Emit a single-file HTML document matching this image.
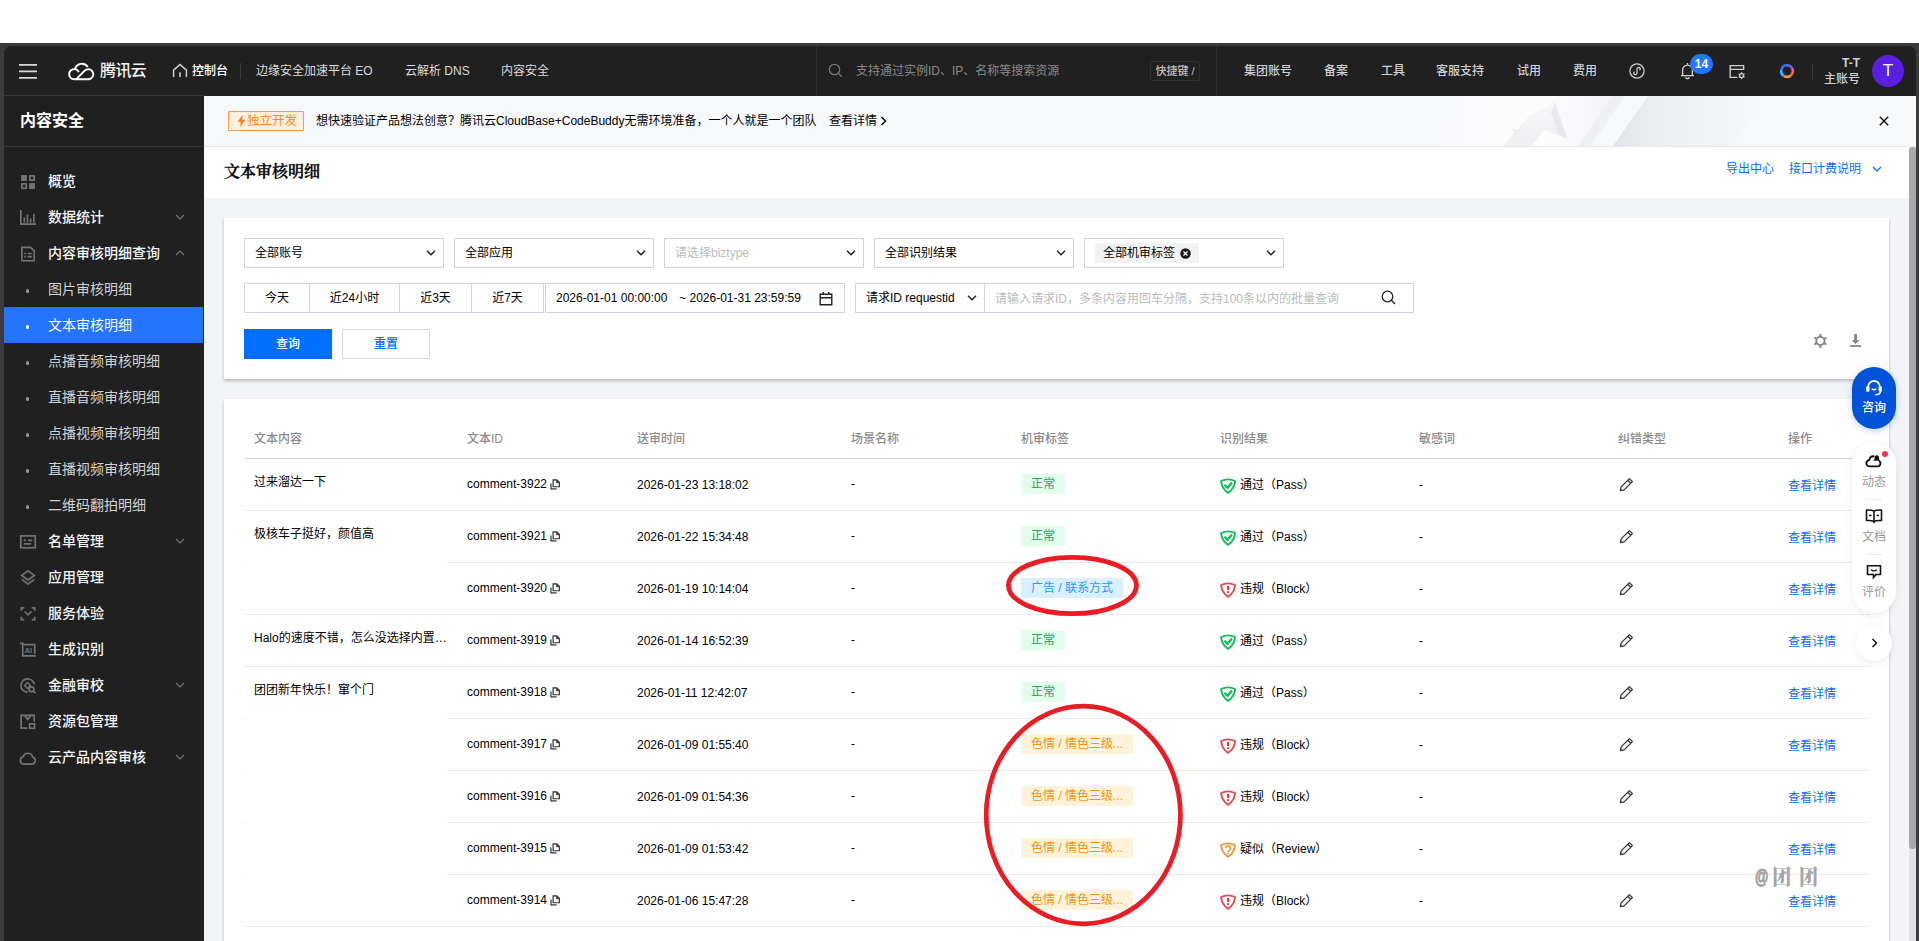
<!DOCTYPE html>
<html lang="zh-CN">
<head>
<meta charset="utf-8">
<title>文本审核明细 - 内容安全 - 腾讯云</title>
<style>
*{box-sizing:border-box;margin:0;padding:0}
html,body{width:1919px;height:941px;overflow:hidden;background:#fff}
body{font-family:"Liberation Sans","Noto Sans CJK SC",sans-serif;font-size:12px;color:#000;position:relative;line-height:1}
.abs{position:absolute}
.t{position:absolute;white-space:nowrap;line-height:20px;height:20px}
svg{display:block;overflow:visible}
#frame{position:absolute;left:0;top:43px;width:1919px;height:898px;background:#3b3b3b}
#inner{position:absolute;left:4px;top:3px;width:1912px;height:895px;background:#202020;border-radius:8px 8px 0 0;overflow:hidden}
/* everything inside #app is positioned in page coordinates */
#app{position:absolute;left:-4px;top:-46px;width:1919px;height:941px}
/* topbar */
.nav{color:#dcdcdc;font-size:12px}
.navr{color:#d0d0d0;font-size:12px;font-weight:500}
/* sidebar */
.mi{position:absolute;left:4px;width:200px;height:36px;color:#f4f4f4;font-size:14px;line-height:36px;font-weight:500}
.mi span{position:absolute;left:44px;top:0;white-space:nowrap}
.mi.sub{color:#d2d2d2;font-weight:400}
.mi.sub:before{content:"";position:absolute;left:21.600px;top:18px;width:3.600px;height:3.600px;background:#9a9a9a;border-radius:50%}
.mi.act{background:#2474ff;color:#fff;width:199px}
.mi.act:before{background:#fff}
.mi svg{position:absolute;left:15px;top:10px;width:17px;height:17px}.mi svg.chev{width:10px;height:10px}
.mi .chev{left:171px;top:13px}
/* main */
#main{position:absolute;left:204px;top:96px;width:1712px;height:845px;background:#f3f4f7}
.card{position:absolute;background:#fff;box-shadow:0 2px 3px 0 rgba(54,58,80,.3)}
.sel{position:absolute;height:30px;border:1px solid #cfd5de;background:#fff;font-size:12px;line-height:28px;padding-left:10px;white-space:nowrap}
.sel .cv{position:absolute;right:7px;top:10px}
.ph{color:#bbb}
.seg{position:absolute;top:283px;height:30px;border:1px solid #cfd5de;background:#fff;text-align:center;line-height:28px;font-size:12px}
/* table */
.th{position:absolute;top:429px;font-size:12px;color:#8b8b8b;line-height:20px;font-weight:500;white-space:nowrap}
.hl{position:absolute;height:1px;background:#e7eaef}
.td{position:absolute;font-size:12px;line-height:20px;white-space:nowrap;color:#000}
.tag{position:absolute;left:1021px;height:20px;line-height:20px;padding:0 10px;font-size:12px;white-space:nowrap}
.tg{background:#e1fdec;color:#27a168}
.tb{background:#daefff;color:#1f9bff}
.to{background:#fef2d9;color:#f8920c}
.lnk{color:#0a6cff}
</style>
</head>
<body>
<div id="frame"><div id="inner"><div id="app">

<!-- TOPBAR -->
<div id="topbar" class="abs" style="left:4px;top:46px;width:1912px;height:50px;background:#202020"></div>
<div class="abs" style="left:4px;top:95px;width:200px;height:1px;background:#363636"></div>
<!-- hamburger -->
<svg class="abs" style="left:19px;top:63px" width="18" height="16" viewBox="0 0 18 16"><path d="M0 1.9h18M0 8.4h18M0 14.9h18" stroke="#d8d8d8" stroke-width="1.6" fill="none"/></svg>
<!-- logo -->
<svg class="abs" style="left:68px;top:61px" width="27" height="20" viewBox="0 0 27 20"><g fill="none" stroke="#fff" stroke-width="1.9" stroke-linecap="butt" stroke-linejoin="round"><path d="M8.06 18.3L16.68 9.68A5.05 5.05 0 1 1 20.25 18.3H6.25A5.05 5.05 0 1 1 10.83 11.12"/><path d="M6.9 8.6A7.1 7.1 0 0 1 19.8 5.9"/></g></svg>
<div class="t" style="left:100px;top:61px;font-size:16px;color:#f2f2f2;letter-spacing:-.6px;font-weight:500">腾讯云</div>
<!-- home -->
<svg class="abs" style="left:172px;top:63px" width="16" height="15" viewBox="0 0 16 15"><path d="M1.6 14V7.2L8 1.4l6.4 5.8V14" fill="none" stroke="#cfcfcf" stroke-width="1.5"/><path d="M8 9.3V14" stroke="#cfcfcf" stroke-width="1.6"/></svg>
<div class="t" style="left:192px;top:61px;font-size:12px;color:#fff;font-weight:500">控制台</div>
<div class="abs" style="left:240px;top:63px;width:1px;height:16px;background:#3a3a3a"></div>
<div class="t nav" style="left:256px;top:61px">边缘安全加速平台 EO</div>
<div class="t nav" style="left:405px;top:61px">云解析 DNS</div>
<div class="t nav" style="left:501px;top:61px">内容安全</div>
<!-- search -->
<div class="abs" style="left:816px;top:46px;width:1px;height:50px;background:#2e2e2e"></div>
<svg class="abs" style="left:828px;top:63px" width="15" height="15" viewBox="0 0 15 15"><circle cx="6.5" cy="6.5" r="5.2" fill="none" stroke="#777" stroke-width="1.3"/><path d="M10.3 10.3l3.6 3.6" stroke="#777" stroke-width="1.3"/></svg>
<div class="t" style="left:856px;top:61px;color:#8a8a8a">支持通过实例ID、IP、名称等搜索资源</div>
<div class="abs" style="left:1150px;top:61px;width:50px;height:20px;border:1px solid #303030;border-radius:2px;color:#c0c0c0;font-size:11px;font-weight:500;line-height:18px;text-align:center;white-space:nowrap">快捷键 /</div>
<div class="abs" style="left:1216px;top:46px;width:1px;height:50px;background:#2e2e2e"></div>
<div class="t navr" style="left:1244px;top:61px">集团账号</div>
<div class="t navr" style="left:1324px;top:61px">备案</div>
<div class="t navr" style="left:1381px;top:61px">工具</div>
<div class="t navr" style="left:1436px;top:61px">客服支持</div>
<div class="t navr" style="left:1517px;top:61px">试用</div>
<div class="t navr" style="left:1573px;top:61px">费用</div>
<!-- mini program icon -->
<svg class="abs" style="left:1629px;top:63px" width="16" height="16" viewBox="0 0 16 16"><circle cx="8" cy="8" r="7.1" fill="none" stroke="#cfcfcf" stroke-width="1.3"/><path d="M10.9 6.9a1.6 1.6 0 1 0-2.9-.9v4a1.6 1.6 0 1 1-2.9-.9" fill="none" stroke="#cfcfcf" stroke-width="1.3" stroke-linecap="round"/></svg>
<!-- bell -->
<svg class="abs" style="left:1680px;top:62px" width="15" height="18" viewBox="0 0 15 18"><path d="M1 13.6h13M2.6 13.4V8a4.9 4.9 0 0 1 9.8 0v5.4" fill="none" stroke="#cfcfcf" stroke-width="1.4" stroke-linejoin="round"/><path d="M7.5 1v1.8M5.6 15.2a2 2 0 0 0 3.8 0" fill="none" stroke="#cfcfcf" stroke-width="1.4"/></svg>
<div class="abs" style="left:1690px;top:54px;width:23px;height:20px;border-radius:10px;background:#1f78ff;color:#fff;font-size:12px;font-weight:bold;text-align:center;line-height:20px">14</div>
<!-- billing icon -->
<svg class="abs" style="left:1729px;top:64px" width="17" height="16" viewBox="0 0 17 16"><path d="M14.6 6V1.6H1.2v11.8h7M1.2 5.4h13.4" fill="none" stroke="#cfcfcf" stroke-width="1.4"/><circle cx="12.6" cy="11.6" r="2" fill="none" stroke="#cfcfcf" stroke-width="1.3"/><path d="M12.6 8.3v1.2M12.6 13.7v1.2M9.7 9.9l1.1.6M14.4 12.7l1.1.6M9.7 13.3l1.1-.6M14.4 10.5l1.1-.6" stroke="#cfcfcf" stroke-width="1.2"/></svg>
<!-- ring -->
<svg class="abs" style="left:1779px;top:63px" width="16" height="16" viewBox="0 0 16 16"><g fill="none" stroke-width="2.6"><path d="M8 2.2A5.8 5.8 0 0 1 13 5.1" stroke="#7a5cf0"/><path d="M13 5.1A5.8 5.8 0 0 1 12.1 12.1" stroke="#ff5a6e"/><path d="M12.1 12.1A5.8 5.8 0 0 1 5 13" stroke="#ff9a2e"/><path d="M5 13A5.8 5.8 0 0 1 2.4 6.5" stroke="#2fb6ff"/><path d="M2.4 6.5A5.8 5.8 0 0 1 8 2.2" stroke="#3a6df5"/></g></svg>
<div class="abs" style="left:1812px;top:63px;width:1px;height:16px;background:#3a3a3a"></div>
<div class="t" style="left:1800px;width:60px;text-align:right;top:53px;color:#cfcfcf;font-weight:bold;font-size:12px">T-T</div>
<div class="t" style="left:1800px;width:60px;text-align:right;top:69px;color:#d4d4d4;font-weight:500;font-size:12px">主账号</div>
<div class="abs" style="left:1872px;top:55px;width:32px;height:32px;border-radius:16px;background:#5a1fe0;color:#fff;font-size:17px;text-align:center;line-height:32px">T</div>

<!-- SIDEBAR -->
<div id="sidebar" class="abs" style="left:4px;top:96px;width:200px;height:845px;background:#202020"></div>
<div class="t" style="left:20px;top:111px;font-size:16px;font-weight:bold;color:#fff">内容安全</div>
<div class="abs" style="left:4px;top:146px;width:200px;height:1px;background:#363636"></div>
<div class="mi " style="top:163px"><svg width="16" height="16" viewBox="0 0 16 16"><path d="M2 2h6v6H2zM10 10h6v6h-6z" transform="translate(-1 -1) scale(.9375)" fill="none"/><rect x="2" y="2" width="5.5" height="5.5" fill="#747474"/><rect x="9.5" y="9.5" width="5.5" height="5.5" fill="#747474"/><rect x="10.2" y="2.7" width="4.1" height="4.1" fill="none" stroke="#747474" stroke-width="1.6"/><rect x="2.7" y="10.2" width="4.1" height="4.1" fill="none" stroke="#747474" stroke-width="1.6"/></svg><span>概览</span></div>
<div class="mi " style="top:199px"><svg width="16" height="16" viewBox="0 0 16 16"><path d="M1.7 1v13.3H16" fill="none" stroke="#747474" stroke-width="1.6"/><path d="M5 8v5M8 5.5V13M11 9v4M14 4.5V13" stroke="#747474" stroke-width="1.5"/></svg><span>数据统计</span><svg class="chev" width="10" height="10" viewBox="0 0 10 10"><path d="M1 3l4 4 4-4" fill="none" stroke="#777" stroke-width="1.2"/></svg></div>
<div class="mi " style="top:235px"><svg width="16" height="16" viewBox="0 0 16 16"><path d="M2.7 2.2h8.2l3.4 3.4v9.2H2.7z" fill="none" stroke="#747474" stroke-width="1.6"/><path d="M5 8h1.6M8 8h4M5 11h1.6M8 11h4" stroke="#747474" stroke-width="1.6"/></svg><span>内容审核明细查询</span><svg class="chev" width="10" height="10" viewBox="0 0 10 10"><path d="M1 7l4-4 4 4" fill="none" stroke="#777" stroke-width="1.2"/></svg></div>
<div class="mi sub" style="top:271px"><span>图片审核明细</span></div>
<div class="mi sub act" style="top:307px"><span>文本审核明细</span></div>
<div class="mi sub" style="top:343px"><span>点播音频审核明细</span></div>
<div class="mi sub" style="top:379px"><span>直播音频审核明细</span></div>
<div class="mi sub" style="top:415px"><span>点播视频审核明细</span></div>
<div class="mi sub" style="top:451px"><span>直播视频审核明细</span></div>
<div class="mi sub" style="top:487px"><span>二维码翻拍明细</span></div>
<div class="mi " style="top:523px"><svg width="16" height="16" viewBox="0 0 16 16"><rect x="1.7" y="2.7" width="13.6" height="11.2" fill="none" stroke="#747474" stroke-width="1.6"/><path d="M4.5 7h2M8.5 7h4M4.5 10.3h7" stroke="#747474" stroke-width="1.6"/></svg><span>名单管理</span><svg class="chev" width="10" height="10" viewBox="0 0 10 10"><path d="M1 3l4 4 4-4" fill="none" stroke="#777" stroke-width="1.2"/></svg></div>
<div class="mi " style="top:559px"><svg width="16" height="16" viewBox="0 0 16 16"><path d="M8.5 1.8l6 4.2-6 4.2-6-4.2z" fill="none" stroke="#747474" stroke-width="1.6" stroke-linejoin="miter"/><path d="M2.5 9.8l6 4.2 6-4.2" fill="none" stroke="#747474" stroke-width="1.6"/></svg><span>应用管理</span></div>
<div class="mi " style="top:595px"><svg width="16" height="16" viewBox="0 0 16 16"><path d="M2.2 5.5V2.7H5M12 2.7h2.8v2.8M14.8 11v2.8H12M5 13.800H2.200V11" fill="none" stroke="#747474" stroke-width="1.6"/><path d="M5.300 6.300l3.200 3 3.300-3.300" fill="none" stroke="#747474" stroke-width="1.6"/></svg><span>服务体验</span></div>
<div class="mi " style="top:631px"><svg width="16" height="16" viewBox="0 0 16 16"><path d="M1 2.200h2.500V14H16M3.500 3.500h11.300V12" fill="none" stroke="#747474" stroke-width="1.600"/><text x="5.200" y="11" font-size="7" font-weight="bold" fill="#747474" font-family="Liberation Sans,sans-serif">AI</text></svg><span>生成识别</span></div>
<div class="mi " style="top:667px"><svg width="16" height="16" viewBox="0 0 16 16"><path d="M8.200 14.300A6.300 6.300 0 1 1 14.300 7" fill="none" stroke="#747474" stroke-width="1.600"/><path d="M5.200 8l2.800-2.800L10.800 8 8 10.800z" fill="none" stroke="#747474" stroke-width="1.300"/><circle cx="11.800" cy="11.500" r="2.300" fill="none" stroke="#747474" stroke-width="1.600"/><path d="M13.500 13.300l2 2" stroke="#747474" stroke-width="1.600"/></svg><span>金融审校</span><svg class="chev" width="10" height="10" viewBox="0 0 10 10"><path d="M1 3l4 4 4-4" fill="none" stroke="#777" stroke-width="1.2"/></svg></div>
<div class="mi " style="top:703px"><svg width="16" height="16" viewBox="0 0 16 16"><path d="M8 14.300H2V2.200h12.300v6" fill="none" stroke="#747474" stroke-width="1.600"/><path d="M5.500 2.500l2.700 3.500 2.700-3.500" fill="none" stroke="#747474" stroke-width="1.600"/><rect x="10" y="10.200" width="4.600" height="4.200" fill="none" stroke="#747474" stroke-width="1.600"/></svg><span>资源包管理</span></div>
<div class="mi " style="top:739px"><svg width="16" height="16" viewBox="0 0 16 16"><path d="M4.800 14.200h7a3.400 3.400 0 0 0 1-6.650A4.600 4.600 0 0 0 3.900 7.300 3.500 3.500 0 0 0 4.800 14.200z" fill="none" stroke="#747474" stroke-width="1.600" stroke-linejoin="round"/></svg><span>云产品内容审核</span><svg class="chev" width="10" height="10" viewBox="0 0 10 10"><path d="M1 3l4 4 4-4" fill="none" stroke="#777" stroke-width="1.2"/></svg></div>

<!-- MAIN -->
<div id="main"></div>
<!-- banner -->
<div class="abs" style="left:204px;top:96px;width:1712px;height:51px;background:#f7f8fa;border-bottom:1px solid #e4e8ef;overflow:hidden">
<svg class="abs" style="left:1176px;top:0" width="540" height="50" viewBox="0 0 540 50">
<defs>
<linearGradient id="g1" x1="0" y1="0" x2="1" y2="0"><stop offset="0" stop-color="#e2e3e6"/><stop offset=".35" stop-color="#eeeff1"/><stop offset="1" stop-color="#f7f8fa"/></linearGradient>
<linearGradient id="g2" x1="0" y1="0" x2="1" y2="0"><stop offset="0" stop-color="#f7f8fa"/><stop offset=".6" stop-color="#fdfdfe"/><stop offset="1" stop-color="#f2f3f5"/></linearGradient>
<linearGradient id="g3" x1="0" y1="0" x2="0" y2="1"><stop offset="0" stop-color="#f3f4f6"/><stop offset="1" stop-color="#e6e7ea"/></linearGradient>
</defs>
<path d="M85 0L50 50h150L235 0z" fill="url(#g2)"/>
<path d="M268 0L233 50h120L388 0z" fill="url(#g1)"/>
<path d="M232 0L198 50h12L245 0z" fill="#eff0f2"/>
<path d="M175 6l12 36-22-8-14 16h-28l26-30z" fill="url(#g3)" opacity=".6"/>
<path d="M175 6l12 36-8-3-8-22z" fill="#e3e4e7" opacity=".7"/>
<path d="M132 33l10 0-5 8z" fill="#eeeff1"/>
</svg>
<div class="abs" style="left:24px;top:15px;width:76px;height:20px;border:1px solid #ff9c4d;background:#ffefdf;border-radius:1px"></div>
<svg class="abs" style="left:33px;top:19px" width="9" height="12" viewBox="0 0 9 12"><path d="M5.600 0L.5 6.800h3.300L3 12l5.500-7.200H5z" fill="#ff7a1a"/></svg>
<div class="t" style="left:43px;top:15px;font-size:12.500px;color:#ff8a2a">独立开发</div>
<div class="t" style="left:112px;top:15px;color:#000">想快速验证产品想法创意？腾讯云CloudBase+CodeBuddy无需环境准备，一个人就是一个团队</div>
<div class="t" style="left:625px;top:15px;color:#000">查看详情</div>
<svg class="abs" style="left:676px;top:20px" width="7" height="10" viewBox="0 0 7 10"><path d="M1.500 1l4 4-4 4" fill="none" stroke="#000" stroke-width="1.400"/></svg>
<svg class="abs" style="left:1675px;top:20px" width="10" height="10" viewBox="0 0 10 10"><path d="M.8.800l8.400 8.400M9.200.800L.8 9.200" stroke="#111" stroke-width="1.400"/></svg>
</div>
<!-- page header -->
<div class="abs" style="left:204px;top:147px;width:1705px;height:51px;background:#fff"></div>
<div class="t" style="left:224px;top:162px;font-family:'Liberation Serif','Noto Serif CJK SC',serif;font-size:16px;font-weight:600;color:#000;-webkit-text-stroke:.3px #000">文本审核明细</div>
<div class="t lnk" style="left:1726px;top:159px">导出中心</div>
<div class="t lnk" style="left:1789px;top:159px">接口计费说明</div>
<svg class="abs" style="left:1872px;top:166px" width="10" height="7" viewBox="0 0 10 7"><path d="M1 1l4 4 4-4" fill="none" stroke="#006eff" stroke-width="1.300"/></svg>

<!-- filter card -->
<div class="card" style="left:224px;top:218px;width:1665px;height:161px"></div>
<div class="sel" style="left:244px;top:238px;width:200px">全部账号<svg class="cv" width="10" height="8" viewBox="0 0 10 8"><path d="M1 1.800l4 4 4-4" fill="none" stroke="#222" stroke-width="1.500"/></svg></div>
<div class="sel" style="left:454px;top:238px;width:200px">全部应用<svg class="cv" width="10" height="8" viewBox="0 0 10 8"><path d="M1 1.800l4 4 4-4" fill="none" stroke="#222" stroke-width="1.500"/></svg></div>
<div class="sel" style="left:664px;top:238px;width:200px"><span class="ph">请选择biztype</span><svg class="cv" width="10" height="8" viewBox="0 0 10 8"><path d="M1 1.800l4 4 4-4" fill="none" stroke="#222" stroke-width="1.500"/></svg></div>
<div class="sel" style="left:874px;top:238px;width:200px">全部识别结果<svg class="cv" width="10" height="8" viewBox="0 0 10 8"><path d="M1 1.800l4 4 4-4" fill="none" stroke="#222" stroke-width="1.500"/></svg></div>
<div class="sel" style="left:1084px;top:238px;width:200px"><div class="abs" style="left:10px;top:4px;width:104px;height:20px;background:#f2f2f2"></div><span class="abs" style="left:18px;top:0">全部机审标签</span><svg class="abs" style="left:95px;top:9px" width="11" height="11" viewBox="0 0 11 11"><circle cx="5.500" cy="5.500" r="5.200" fill="#1a1a1a"/><path d="M3.500 3.500l4 4M7.500 3.500l-4 4" stroke="#fff" stroke-width="1.300"/></svg><svg class="cv" width="10" height="8" viewBox="0 0 10 8"><path d="M1 1.800l4 4 4-4" fill="none" stroke="#222" stroke-width="1.500"/></svg></div>

<div class="seg" style="left:244px;width:66px">今天</div>
<div class="seg" style="left:309px;width:91px">近24小时</div>
<div class="seg" style="left:399px;width:73px">近3天</div>
<div class="seg" style="left:471px;width:73px">近7天</div>
<div class="sel" style="left:545px;top:283px;width:300px">2026-01-01 00:00:00 &nbsp;&nbsp;<span style="margin-left:1.700px">~ 2026-01-31 23:59:59</span>
<svg class="abs" style="left:273px;top:7px" width="14" height="15" viewBox="0 0 14 15"><path d="M1.200 3.200h11.600v10.600H1.200zM1.200 6.800h11.600M4.200 1v3M9.800 1v3" fill="none" stroke="#222" stroke-width="1.400"/></svg></div>
<div class="sel" style="left:855px;top:283px;width:130px">请求ID requestid<svg class="cv" width="10" height="8" viewBox="0 0 10 8"><path d="M1 1.800l4 4 4-4" fill="none" stroke="#222" stroke-width="1.500"/></svg></div>
<div class="sel" style="left:984px;top:283px;width:430px"><span class="ph" style="position:relative;top:1px">请输入请求ID，多条内容用回车分隔，支持100条以内的批量查询</span>
<svg class="abs" style="left:396px;top:6px" width="15" height="15" viewBox="0 0 15 15"><circle cx="6.500" cy="6.500" r="5.300" fill="none" stroke="#222" stroke-width="1.300"/><path d="M10.300 10.300l3.700 3.700" stroke="#222" stroke-width="1.300"/></svg></div>
<div class="abs" style="left:244px;top:329px;width:88px;height:30px;background:#006eff;color:#fff;text-align:center;line-height:30px;font-size:12px;font-weight:500">查询</div>
<div class="abs" style="left:342px;top:329px;width:88px;height:30px;background:#fff;border:1px solid #d6dbe3;color:#006eff;text-align:center;line-height:28px;font-size:12px;font-weight:500">重置</div>
<!-- gear / download -->
<svg class="abs" style="left:1813px;top:333px" width="15" height="16" viewBox="0 0 15 16"><circle cx="7.400" cy="8" r="4.100" fill="none" stroke="#828282" stroke-width="1.900"/><path d="M7.400 1v2.600M7.400 12.400V15M1.400 4.500l2.200 1.300M11.200 10.200l2.200 1.300M1.400 11.500l2.200-1.300M11.200 5.800l2.200-1.300" stroke="#828282" stroke-width="2"/></svg>
<svg class="abs" style="left:1849px;top:333px" width="13" height="15" viewBox="0 0 13 15"><path d="M5.200 1h2.700v6h2.400L6.550 11.200 2.800 7h2.400z" fill="#848484"/><path d="M1 13h11" stroke="#848484" stroke-width="1.800"/></svg>
<!-- table card -->
<div class="card" style="left:224px;top:399px;width:1665px;height:560px"></div>
<div class="th" style="left:254px">文本内容</div><div class="th" style="left:467px">文本ID</div><div class="th" style="left:637px">送审时间</div><div class="th" style="left:851px">场景名称</div><div class="th" style="left:1021px">机审标签</div><div class="th" style="left:1220px">识别结果</div><div class="th" style="left:1419px">敏感词</div><div class="th" style="left:1618px">纠错类型</div><div class="th" style="left:1788px">操作</div>
<div class="hl" style="left:244px;top:458px;width:1626px;background:#cfd5de"></div>
<div class="hl" style="left:244px;top:510px;width:1626px"></div>
<div class="td" style="left:254px;top:472px">过来溜达一下</div><div class="td" style="left:467px;top:474px">comment-3922</div><svg class="abs" style="left:550px;top:479px" width="10.300" height="11.200" viewBox="0 0 11 12"><path d="M3.300 1h4l2.700 2.700V8.300H3.300z" fill="none" stroke="#333" stroke-width="1.300"/><path d="M7 1v3h3" fill="#333" stroke="#333" stroke-width=".8"/><path d="M1 4.700v6h6" fill="none" stroke="#333" stroke-width="1.300"/></svg><div class="td" style="left:637px;top:475px">2026-01-23 13:18:02</div><div class="td" style="left:851px;top:474px">-</div><div class="tag tg" style="top:474px">正常</div><svg class="abs" style="left:1220px;top:478px" width="16" height="16" viewBox="0 0 16 16"><path d="M1.100 3Q8.100 -.200 15.100 3 14.700 10.300 8.100 14.900 1.500 10.300 1.100 3z" fill="none" stroke="#10bd57" stroke-width="1.900" stroke-linejoin="round"/><path d="M4.400 6.700l3.100 3.100 4.400-5.300" fill="none" stroke="#10bd57" stroke-width="2.300"/></svg><div class="td" style="left:1240px;top:475px">通过（Pass）</div><div class="td" style="left:1419px;top:475px">-</div><svg class="abs" style="left:1619px;top:477px" width="15" height="15" viewBox="0 0 15 15"><path d="M10.400 1.600l3 3-8.300 8.300-3.700 .800 .700-3.800z" fill="none" stroke="#333" stroke-width="1.300" stroke-linejoin="round"/><path d="M8.800 3.200l3 3" stroke="#333" stroke-width="1.300"/></svg><div class="td lnk" style="left:1788px;top:476px">查看详情</div>
<div class="hl" style="left:447px;top:562px;width:1423px"></div>
<div class="hl" style="left:244px;top:562px;width:2px;background:#e9ecf3"></div>
<div class="td" style="left:254px;top:524px">极核车子挺好，颜值高</div><div class="td" style="left:467px;top:526px">comment-3921</div><svg class="abs" style="left:550px;top:531px" width="10.300" height="11.200" viewBox="0 0 11 12"><path d="M3.300 1h4l2.700 2.700V8.300H3.300z" fill="none" stroke="#333" stroke-width="1.300"/><path d="M7 1v3h3" fill="#333" stroke="#333" stroke-width=".8"/><path d="M1 4.700v6h6" fill="none" stroke="#333" stroke-width="1.300"/></svg><div class="td" style="left:637px;top:527px">2026-01-22 15:34:48</div><div class="td" style="left:851px;top:526px">-</div><div class="tag tg" style="top:526px">正常</div><svg class="abs" style="left:1220px;top:530px" width="16" height="16" viewBox="0 0 16 16"><path d="M1.100 3Q8.100 -.200 15.100 3 14.700 10.300 8.100 14.900 1.500 10.300 1.100 3z" fill="none" stroke="#10bd57" stroke-width="1.900" stroke-linejoin="round"/><path d="M4.400 6.700l3.100 3.100 4.400-5.300" fill="none" stroke="#10bd57" stroke-width="2.300"/></svg><div class="td" style="left:1240px;top:527px">通过（Pass）</div><div class="td" style="left:1419px;top:527px">-</div><svg class="abs" style="left:1619px;top:529px" width="15" height="15" viewBox="0 0 15 15"><path d="M10.400 1.600l3 3-8.300 8.300-3.700 .800 .700-3.800z" fill="none" stroke="#333" stroke-width="1.300" stroke-linejoin="round"/><path d="M8.800 3.200l3 3" stroke="#333" stroke-width="1.300"/></svg><div class="td lnk" style="left:1788px;top:528px">查看详情</div>
<div class="hl" style="left:244px;top:614px;width:1626px"></div>
<div class="td" style="left:467px;top:578px">comment-3920</div><svg class="abs" style="left:550px;top:583px" width="10.300" height="11.200" viewBox="0 0 11 12"><path d="M3.300 1h4l2.700 2.700V8.300H3.300z" fill="none" stroke="#333" stroke-width="1.300"/><path d="M7 1v3h3" fill="#333" stroke="#333" stroke-width=".8"/><path d="M1 4.700v6h6" fill="none" stroke="#333" stroke-width="1.300"/></svg><div class="td" style="left:637px;top:579px">2026-01-19 10:14:04</div><div class="td" style="left:851px;top:578px">-</div><div class="tag tb" style="top:578px">广告 / 联系方式</div><svg class="abs" style="left:1220px;top:582px" width="16" height="16" viewBox="0 0 16 16"><path d="M1.100 3Q8.100 -.200 15.100 3 14.700 10.300 8.100 14.900 1.500 10.300 1.100 3z" fill="none" stroke="#e34d59" stroke-width="1.900" stroke-linejoin="round"/><path d="M8.100 4.100v3.900M8.100 9.200v1.900" stroke="#e53535" stroke-width="2.100"/></svg><div class="td" style="left:1240px;top:579px">违规（Block）</div><div class="td" style="left:1419px;top:579px">-</div><svg class="abs" style="left:1619px;top:581px" width="15" height="15" viewBox="0 0 15 15"><path d="M10.400 1.600l3 3-8.300 8.300-3.700 .800 .700-3.800z" fill="none" stroke="#333" stroke-width="1.300" stroke-linejoin="round"/><path d="M8.800 3.200l3 3" stroke="#333" stroke-width="1.300"/></svg><div class="td lnk" style="left:1788px;top:580px">查看详情</div>
<div class="hl" style="left:244px;top:666px;width:1626px"></div>
<div class="td" style="left:254px;top:628px">Halo的速度不错，怎么没选择内置…</div><div class="td" style="left:467px;top:630px">comment-3919</div><svg class="abs" style="left:550px;top:635px" width="10.300" height="11.200" viewBox="0 0 11 12"><path d="M3.300 1h4l2.700 2.700V8.300H3.300z" fill="none" stroke="#333" stroke-width="1.300"/><path d="M7 1v3h3" fill="#333" stroke="#333" stroke-width=".8"/><path d="M1 4.700v6h6" fill="none" stroke="#333" stroke-width="1.300"/></svg><div class="td" style="left:637px;top:631px">2026-01-14 16:52:39</div><div class="td" style="left:851px;top:630px">-</div><div class="tag tg" style="top:630px">正常</div><svg class="abs" style="left:1220px;top:634px" width="16" height="16" viewBox="0 0 16 16"><path d="M1.100 3Q8.100 -.200 15.100 3 14.700 10.300 8.100 14.900 1.500 10.300 1.100 3z" fill="none" stroke="#10bd57" stroke-width="1.900" stroke-linejoin="round"/><path d="M4.400 6.700l3.100 3.100 4.400-5.300" fill="none" stroke="#10bd57" stroke-width="2.300"/></svg><div class="td" style="left:1240px;top:631px">通过（Pass）</div><div class="td" style="left:1419px;top:631px">-</div><svg class="abs" style="left:1619px;top:633px" width="15" height="15" viewBox="0 0 15 15"><path d="M10.400 1.600l3 3-8.300 8.300-3.700 .800 .700-3.800z" fill="none" stroke="#333" stroke-width="1.300" stroke-linejoin="round"/><path d="M8.800 3.200l3 3" stroke="#333" stroke-width="1.300"/></svg><div class="td lnk" style="left:1788px;top:632px">查看详情</div>
<div class="hl" style="left:447px;top:718px;width:1423px"></div>
<div class="hl" style="left:244px;top:718px;width:2px;background:#e9ecf3"></div>
<div class="td" style="left:254px;top:680px">团团新年快乐！窜个门</div><div class="td" style="left:467px;top:682px">comment-3918</div><svg class="abs" style="left:550px;top:687px" width="10.300" height="11.200" viewBox="0 0 11 12"><path d="M3.300 1h4l2.700 2.700V8.300H3.300z" fill="none" stroke="#333" stroke-width="1.300"/><path d="M7 1v3h3" fill="#333" stroke="#333" stroke-width=".8"/><path d="M1 4.700v6h6" fill="none" stroke="#333" stroke-width="1.300"/></svg><div class="td" style="left:637px;top:683px">2026-01-11 12:42:07</div><div class="td" style="left:851px;top:682px">-</div><div class="tag tg" style="top:682px">正常</div><svg class="abs" style="left:1220px;top:686px" width="16" height="16" viewBox="0 0 16 16"><path d="M1.100 3Q8.100 -.200 15.100 3 14.700 10.300 8.100 14.900 1.500 10.300 1.100 3z" fill="none" stroke="#10bd57" stroke-width="1.900" stroke-linejoin="round"/><path d="M4.400 6.700l3.100 3.100 4.400-5.300" fill="none" stroke="#10bd57" stroke-width="2.300"/></svg><div class="td" style="left:1240px;top:683px">通过（Pass）</div><div class="td" style="left:1419px;top:683px">-</div><svg class="abs" style="left:1619px;top:685px" width="15" height="15" viewBox="0 0 15 15"><path d="M10.400 1.600l3 3-8.300 8.300-3.700 .800 .700-3.800z" fill="none" stroke="#333" stroke-width="1.300" stroke-linejoin="round"/><path d="M8.800 3.200l3 3" stroke="#333" stroke-width="1.300"/></svg><div class="td lnk" style="left:1788px;top:684px">查看详情</div>
<div class="hl" style="left:447px;top:770px;width:1423px"></div>
<div class="hl" style="left:244px;top:770px;width:2px;background:#e9ecf3"></div>
<div class="td" style="left:467px;top:734px">comment-3917</div><svg class="abs" style="left:550px;top:739px" width="10.300" height="11.200" viewBox="0 0 11 12"><path d="M3.300 1h4l2.700 2.700V8.300H3.300z" fill="none" stroke="#333" stroke-width="1.300"/><path d="M7 1v3h3" fill="#333" stroke="#333" stroke-width=".8"/><path d="M1 4.700v6h6" fill="none" stroke="#333" stroke-width="1.300"/></svg><div class="td" style="left:637px;top:735px">2026-01-09 01:55:40</div><div class="td" style="left:851px;top:734px">-</div><div class="tag to" style="top:734px">色情 / 情色三级...</div><svg class="abs" style="left:1220px;top:738px" width="16" height="16" viewBox="0 0 16 16"><path d="M1.100 3Q8.100 -.200 15.100 3 14.700 10.300 8.100 14.900 1.500 10.300 1.100 3z" fill="none" stroke="#e34d59" stroke-width="1.900" stroke-linejoin="round"/><path d="M8.100 4.100v3.900M8.100 9.200v1.900" stroke="#e53535" stroke-width="2.100"/></svg><div class="td" style="left:1240px;top:735px">违规（Block）</div><div class="td" style="left:1419px;top:735px">-</div><svg class="abs" style="left:1619px;top:737px" width="15" height="15" viewBox="0 0 15 15"><path d="M10.400 1.600l3 3-8.300 8.300-3.700 .800 .700-3.800z" fill="none" stroke="#333" stroke-width="1.300" stroke-linejoin="round"/><path d="M8.800 3.200l3 3" stroke="#333" stroke-width="1.300"/></svg><div class="td lnk" style="left:1788px;top:736px">查看详情</div>
<div class="hl" style="left:447px;top:822px;width:1423px"></div>
<div class="hl" style="left:244px;top:822px;width:2px;background:#e9ecf3"></div>
<div class="td" style="left:467px;top:786px">comment-3916</div><svg class="abs" style="left:550px;top:791px" width="10.300" height="11.200" viewBox="0 0 11 12"><path d="M3.300 1h4l2.700 2.700V8.300H3.300z" fill="none" stroke="#333" stroke-width="1.300"/><path d="M7 1v3h3" fill="#333" stroke="#333" stroke-width=".8"/><path d="M1 4.700v6h6" fill="none" stroke="#333" stroke-width="1.300"/></svg><div class="td" style="left:637px;top:787px">2026-01-09 01:54:36</div><div class="td" style="left:851px;top:786px">-</div><div class="tag to" style="top:786px">色情 / 情色三级...</div><svg class="abs" style="left:1220px;top:790px" width="16" height="16" viewBox="0 0 16 16"><path d="M1.100 3Q8.100 -.200 15.100 3 14.700 10.300 8.100 14.900 1.500 10.300 1.100 3z" fill="none" stroke="#e34d59" stroke-width="1.900" stroke-linejoin="round"/><path d="M8.100 4.100v3.900M8.100 9.200v1.900" stroke="#e53535" stroke-width="2.100"/></svg><div class="td" style="left:1240px;top:787px">违规（Block）</div><div class="td" style="left:1419px;top:787px">-</div><svg class="abs" style="left:1619px;top:789px" width="15" height="15" viewBox="0 0 15 15"><path d="M10.400 1.600l3 3-8.300 8.300-3.700 .800 .700-3.800z" fill="none" stroke="#333" stroke-width="1.300" stroke-linejoin="round"/><path d="M8.800 3.200l3 3" stroke="#333" stroke-width="1.300"/></svg><div class="td lnk" style="left:1788px;top:788px">查看详情</div>
<div class="hl" style="left:447px;top:874px;width:1423px"></div>
<div class="hl" style="left:244px;top:874px;width:2px;background:#e9ecf3"></div>
<div class="td" style="left:467px;top:838px">comment-3915</div><svg class="abs" style="left:550px;top:843px" width="10.300" height="11.200" viewBox="0 0 11 12"><path d="M3.300 1h4l2.700 2.700V8.300H3.300z" fill="none" stroke="#333" stroke-width="1.300"/><path d="M7 1v3h3" fill="#333" stroke="#333" stroke-width=".8"/><path d="M1 4.700v6h6" fill="none" stroke="#333" stroke-width="1.300"/></svg><div class="td" style="left:637px;top:839px">2026-01-09 01:53:42</div><div class="td" style="left:851px;top:838px">-</div><div class="tag to" style="top:838px">色情 / 情色三级...</div><svg class="abs" style="left:1220px;top:842px" width="16" height="16" viewBox="0 0 16 16"><path d="M1.100 3Q8.100 -.200 15.100 3 14.700 10.300 8.100 14.900 1.500 10.300 1.100 3z" fill="none" stroke="#f0983c" stroke-width="1.900" stroke-linejoin="round"/><path d="M5.700 6.300a2.400 2.400 0 1 1 3.800 1.900c-.9.600-1.400 1-1.400 1.900M8.100 10.800v1.500" fill="none" stroke="#f0983c" stroke-width="1.700"/></svg><div class="td" style="left:1240px;top:839px">疑似（Review）</div><div class="td" style="left:1419px;top:839px">-</div><svg class="abs" style="left:1619px;top:841px" width="15" height="15" viewBox="0 0 15 15"><path d="M10.400 1.600l3 3-8.300 8.300-3.700 .800 .700-3.800z" fill="none" stroke="#333" stroke-width="1.300" stroke-linejoin="round"/><path d="M8.800 3.200l3 3" stroke="#333" stroke-width="1.300"/></svg><div class="td lnk" style="left:1788px;top:840px">查看详情</div>
<div class="hl" style="left:244px;top:926px;width:1626px"></div>
<div class="td" style="left:467px;top:890px">comment-3914</div><svg class="abs" style="left:550px;top:895px" width="10.300" height="11.200" viewBox="0 0 11 12"><path d="M3.300 1h4l2.700 2.700V8.300H3.300z" fill="none" stroke="#333" stroke-width="1.300"/><path d="M7 1v3h3" fill="#333" stroke="#333" stroke-width=".8"/><path d="M1 4.700v6h6" fill="none" stroke="#333" stroke-width="1.300"/></svg><div class="td" style="left:637px;top:891px">2026-01-06 15:47:28</div><div class="td" style="left:851px;top:890px">-</div><div class="tag to" style="top:890px">色情 / 情色三级...</div><svg class="abs" style="left:1220px;top:894px" width="16" height="16" viewBox="0 0 16 16"><path d="M1.100 3Q8.100 -.200 15.100 3 14.700 10.300 8.100 14.900 1.500 10.300 1.100 3z" fill="none" stroke="#e34d59" stroke-width="1.900" stroke-linejoin="round"/><path d="M8.100 4.100v3.900M8.100 9.200v1.900" stroke="#e53535" stroke-width="2.100"/></svg><div class="td" style="left:1240px;top:891px">违规（Block）</div><div class="td" style="left:1419px;top:891px">-</div><svg class="abs" style="left:1619px;top:893px" width="15" height="15" viewBox="0 0 15 15"><path d="M10.400 1.600l3 3-8.300 8.300-3.700 .800 .700-3.800z" fill="none" stroke="#333" stroke-width="1.300" stroke-linejoin="round"/><path d="M8.800 3.200l3 3" stroke="#333" stroke-width="1.300"/></svg><div class="td lnk" style="left:1788px;top:892px">查看详情</div>
<!-- red annotations -->
<svg class="abs" style="left:0;top:0;pointer-events:none" width="1919" height="941" viewBox="0 0 1919 941"><ellipse cx="1072.400" cy="585.500" rx="64" ry="28.200" fill="none" stroke="#ed1c24" stroke-width="4.800"/><ellipse cx="1083.300" cy="815" rx="97.100" ry="108.800" fill="none" stroke="#ed1c24" stroke-width="4.700"/></svg>
<!-- watermark -->
<div class="abs" style="left:1755px;top:862px;font-family:'Liberation Serif','Noto Serif CJK SC',serif;font-size:19px;line-height:30px;color:#a6a6a6;white-space:nowrap;font-weight:900;letter-spacing:.5px;word-spacing:2px;transform:scaleY(1.1);transform-origin:0 50%"><span style="display:inline-block;font-family:'Liberation Sans',sans-serif;font-weight:bold;font-size:13.500px;line-height:20px;transform:scaleY(1.3);position:relative;top:-2px;margin-right:4px;letter-spacing:0;-webkit-text-stroke:.8px #a6a6a6">@</span>团 团</div>
<!-- floating widgets -->
<div class="abs" style="left:1852px;top:367px;width:44px;height:62px;border-radius:22px;background:#0052d9;box-shadow:0 2px 6px rgba(0,82,217,.25)"></div>
<svg class="abs" style="left:1865px;top:379px" width="18" height="17" viewBox="0 0 18 17"><path d="M3.200 9V7.800a5.800 5.800 0 0 1 11.600 0V9" fill="none" stroke="#fff" stroke-width="1.800"/><rect x="1.200" y="7.300" width="3.200" height="5.500" rx="1" fill="#fff"/><rect x="13.600" y="7.300" width="3.200" height="5.500" rx="1" fill="#fff"/><path d="M15.400 12.300c0 2.400-2 3.500-5.200 3.500" fill="none" stroke="#fff" stroke-width="1.600"/><path d="M6.700 9.700c1.300 1.400 3.300 1.400 4.600 0" fill="none" stroke="#fff" stroke-width="1.600"/></svg>
<div class="t" style="left:1852px;width:44px;text-align:center;top:398px;color:#fff;font-size:12px;font-weight:500">咨询</div>
<div class="abs" style="left:1852px;top:442px;width:44px;height:171px;border-radius:22px;background:#fff;box-shadow:0 2px 8px rgba(0,0,0,.08)"></div>
<svg class="abs" style="left:1865px;top:453px" width="18" height="15" viewBox="0 0 18 15"><path d="M8.500 3.200A4.300 4.300 0 0 0 4.300 7 3.200 3.200 0 0 0 4.800 13.400h7.600a3 3 0 0 0 2.300-5" fill="none" stroke="#111" stroke-width="1.900" stroke-linecap="round"/><path d="M11.800 2.200a2.300 2.300 0 0 1 2.300 2.300v2.300h1v1h-6.600v-1h1V4.500a2.300 2.300 0 0 1 2.300-2.300z" fill="#111"/></svg>
<div class="abs" style="left:1882px;top:451px;width:6px;height:6px;border-radius:3px;background:#f5363e"></div>
<div class="t" style="left:1852px;width:44px;text-align:center;top:472px;color:#979797;font-size:12px">动态</div>
<div class="abs" style="left:1866px;top:499px;width:16px;height:1px;background:#e9e9ee"></div>
<svg class="abs" style="left:1865px;top:508px" width="18" height="16" viewBox="0 0 18 16"><path d="M9 3.200C7.300 2 4.500 1.800 1.500 2v10.500c3-.2 5.800 0 7.500 1.200 1.700-1.200 4.500-1.400 7.500-1.200V2c-3-.2-5.800 0-7.500 1.200zM9 3.200v12" fill="none" stroke="#111" stroke-width="1.600" stroke-linejoin="round"/><path d="M4 7.500h2.500M11.500 7.500H14" stroke="#111" stroke-width="1.500"/></svg>
<div class="t" style="left:1852px;width:44px;text-align:center;top:527px;color:#979797;font-size:12px">文档</div>
<div class="abs" style="left:1866px;top:554px;width:16px;height:1px;background:#e9e9ee"></div>
<svg class="abs" style="left:1866px;top:564px" width="16" height="15" viewBox="0 0 16 15"><path d="M1.500 1.800h13v8.700H10l-2.500 3v-3h-6z" fill="none" stroke="#111" stroke-width="1.600" stroke-linejoin="miter"/><path d="M5 5.700c1.700 1.300 4.300 1.300 6 0" fill="none" stroke="#111" stroke-width="1.400"/></svg>
<div class="t" style="left:1852px;width:44px;text-align:center;top:582px;color:#979797;font-size:12px">评价</div>
<div class="abs" style="left:1856px;top:625px;width:36px;height:36px;border-radius:18px;background:#fff;box-shadow:0 2px 8px rgba(0,0,0,.08)"></div>
<svg class="abs" style="left:1871px;top:638px" width="7" height="10" viewBox="0 0 7 10"><path d="M1.500 1l4 4-4 4" fill="none" stroke="#111" stroke-width="1.500"/></svg>
<!-- scrollbar -->
<div class="abs" style="left:1909px;top:147px;width:7px;height:794px;background:#e1e2e6"></div>
<div class="abs" style="left:1909px;top:147px;width:7px;height:702px;background:#a9a9ab;border-radius:4px"></div>

</div></div></div>
</body>
</html>
